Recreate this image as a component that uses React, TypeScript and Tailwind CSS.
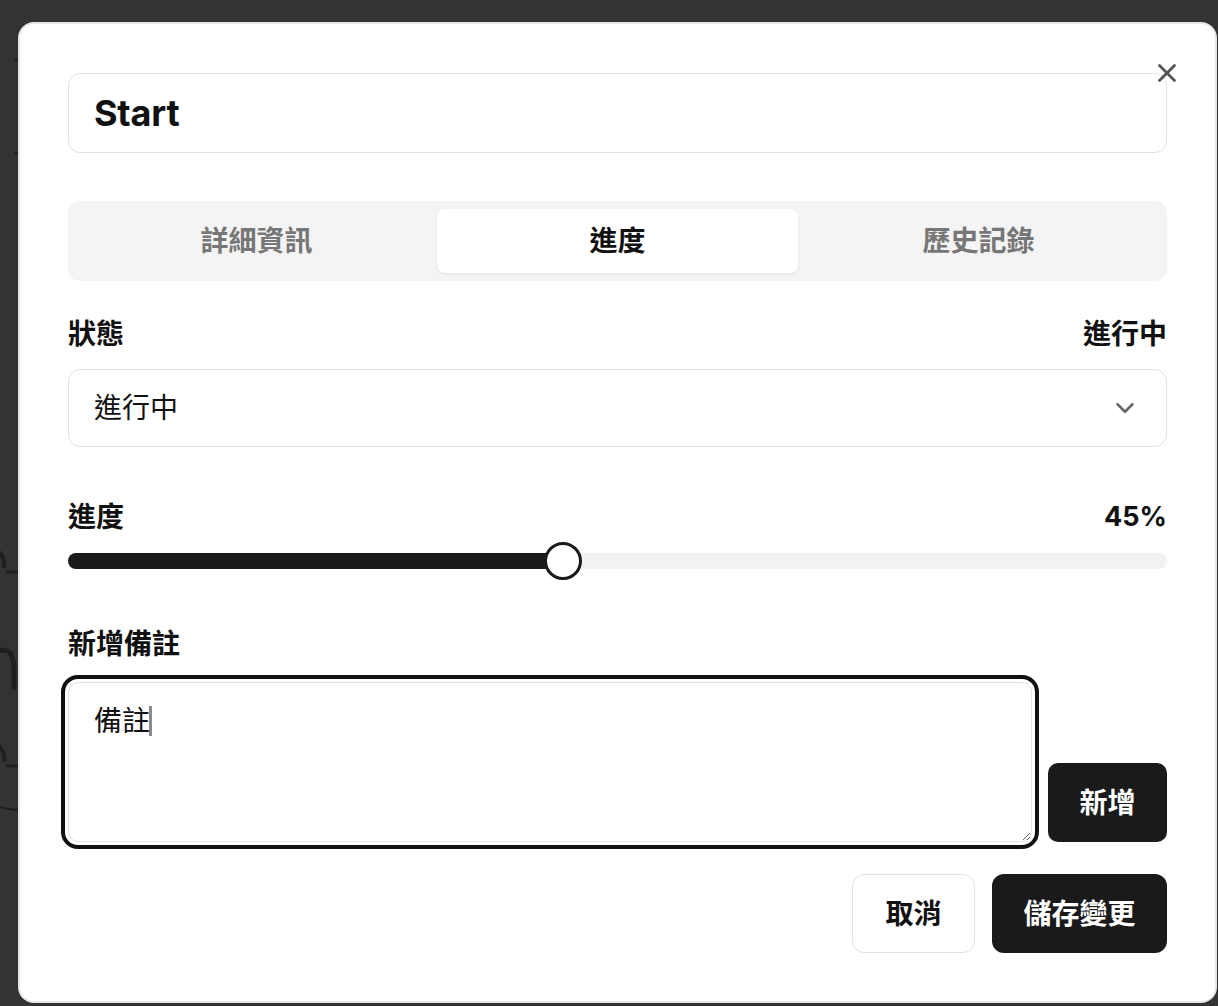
import { X, ChevronDown } from "lucide-react";

const font = "font-['Inter','Noto_Sans_CJK_TC',sans-serif]";

export default function App() {
  const progress = 45;
  const tabs = ["詳細資訊", "進度", "歷史記錄"];
  const active = 1;

  return (
    <div className={`relative min-h-[1006px] w-full overflow-hidden bg-[#333333] ${font}`}>
      {/* page behind the overlay */}
      <svg className="absolute left-0 top-0" width="18" height="1006" fill="none" stroke="#1f1f1f">
        <circle cx="16" cy="60" r="1.5" fill="#1f1f1f" stroke="none" />
        <circle cx="16" cy="153" r="1.5" fill="#1f1f1f" stroke="none" />
        <path d="M-20 548 A 18 18 0 0 1 4 568" strokeWidth="4" />
        <path d="M6 572 H 18" strokeWidth="3" />
        <path d="M-10 655 Q 14 640 14 670 V 690" strokeWidth="5" />
        <path d="M-20 742 A 18 18 0 0 1 4 762" strokeWidth="4" />
        <path d="M6 766 H 18" strokeWidth="3" />
        <path d="M-40 760 A 60 60 0 0 0 18 810" strokeWidth="2" />
      </svg>

      <div className="relative ml-[18px] mt-[22px] h-[981px] w-[1199px] rounded-[16px] border-2 border-[#e6e6e6] bg-white px-[48px] pt-[49px]">
        <button className="absolute right-[33px] top-[34px] text-[#555]">
          <X size={30} strokeWidth={2.2} />
        </button>

        {/* title */}
        <div className="flex h-[80px] items-center rounded-[12px] border-[1.5px] border-[#e2e2e2] px-[25px]">
          <span className="text-[36px] font-bold tracking-[-0.2px] text-[#111]">Start</span>
        </div>

        {/* tabs */}
        <div className="mt-[48px] grid h-[80px] grid-cols-3 rounded-[12px] bg-[#f4f4f4] p-[8px]">
          {tabs.map((tab, i) => (
            <div
              key={tab}
              className={
                i === active
                  ? "flex items-center justify-center rounded-[8px] bg-white text-[28px] font-bold text-[#111] shadow-[0_1px_3px_rgba(0,0,0,0.08)]"
                  : "flex items-center justify-center text-[28px] font-bold text-[#777]"
              }
            >
              {tab}
            </div>
          ))}
        </div>

        {/* status */}
        <div className="mt-[32px] flex h-[42px] items-center justify-between text-[28px] font-bold text-[#111]">
          <span>狀態</span>
          <span>進行中</span>
        </div>
        <div className="mt-[14px] flex h-[78px] items-center justify-between rounded-[12px] border-[1.5px] border-[#e2e2e2] pl-[25px] pr-[26px]">
          <span className="text-[28px] text-[#111]">進行中</span>
          <ChevronDown size={30} strokeWidth={2} className="text-[#666]" />
        </div>

        {/* progress */}
        <div className="mt-[49px] flex h-[42px] items-center justify-between text-[28px] font-bold text-[#111]">
          <span>進度</span>
          <span className="text-[27px] tracking-[0px]">{progress}%</span>
        </div>
        <div className="relative mt-[4px] flex h-[38px] items-center">
          <div className="h-[16px] w-full rounded-full bg-[#f2f2f2]">
            <div className="h-full rounded-full bg-[#1a1a1a]" style={{ width: `${progress}%` }} />
          </div>
          <div
            className="absolute top-0 h-[38px] w-[38px] -translate-x-1/2 rounded-full border-[3px] border-[#1a1a1a] bg-white"
            style={{ left: `${progress}%` }}
          />
        </div>

        {/* note */}
        <div className="mt-[43px] flex h-[42px] items-center text-[28px] font-bold text-[#111]">新增備註</div>
        <div className="mt-[17px] flex items-end gap-[16px]">
          <div className="relative flex-1">
            <textarea
              defaultValue="備註"
              className="block h-[160px] w-full resize-y rounded-[10px] border-[1.5px] border-[#e2e2e2] px-[25px] pt-[17px] text-[28px] leading-[42px] text-[#111] outline-4 outline-offset-[3px] outline-[#111]"
            />
            <span className="absolute left-[81px] top-[24px] h-[30px] w-[3px] bg-[#8a8a8a]" />
          </div>
          <button className="h-[79px] w-[119px] rounded-[10px] bg-[#1a1a1a] text-[28px] font-bold text-white">新增</button>
        </div>

        {/* footer */}
        <div className="mt-[32px] flex justify-end gap-[17px]">
          <button className="h-[79px] w-[123px] rounded-[12px] border-[1.5px] border-[#e2e2e2] bg-white text-[28px] font-bold text-[#111]">
            取消
          </button>
          <button className="h-[79px] w-[175px] rounded-[12px] bg-[#1a1a1a] text-[28px] font-bold text-white">
            儲存變更
          </button>
        </div>
      </div>
    </div>
  );
}
